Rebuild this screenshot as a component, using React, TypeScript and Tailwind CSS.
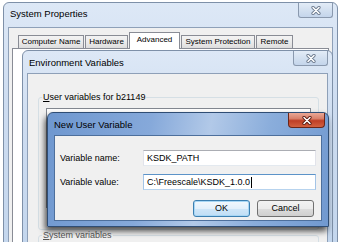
import React from 'react';

// caption close glyph (white X with dark outline)
const CloseGlyph = ({ dark }: { dark: string }) => (
  <svg width="10" height="9" viewBox="0 0 10 9">
    <path d="M2 1.5 L8 7.5 M8 1.5 L2 7.5" stroke={dark} strokeWidth="3.2" strokeLinecap="round" />
    <path d="M2 1.5 L8 7.5 M8 1.5 L2 7.5" stroke="#ffffff" strokeWidth="1.5" strokeLinecap="round" />
  </svg>
);

const InactiveClose = () => (
  <div className="flex h-[15px] w-[35px] shrink-0 items-center justify-center rounded-b-[3px] border border-t-0 border-[#8a99ae] bg-[linear-gradient(180deg,#e3ecf7_0%,#d3e0f0_50%,#c4d5eb_100%)]">
    <CloseGlyph dark="#6d7b8f" />
  </div>
);

const RedClose = () => (
  <div className="-mr-[3px] flex h-[15px] w-[37px] shrink-0 items-center justify-center rounded-b-[4px] border border-t-0 border-[#6a2518] bg-[linear-gradient(180deg,#eaa896_0%,#d8806b_40%,#bf3e25_55%,#d2603f_100%)]">
    <CloseGlyph dark="#5a1a10" />
  </div>
);

const Tab = ({ label, w, active }: { label: string; w: string; active?: boolean }) =>
  active ? (
    <div className={`relative z-10 -mb-[1px] flex h-[17px] items-start justify-center whitespace-nowrap border border-b-0 border-[#898c95] bg-white pt-[3px] text-[8px] ${w}`}>
      {label}
    </div>
  ) : (
    <div className={`flex h-[13px] items-center justify-center whitespace-nowrap border border-b-0 border-[#898c95] bg-[linear-gradient(180deg,#f3f3f3_0%,#ebebeb_50%,#dddddd_100%)] text-[8px] ${w}`}>
      {label}
    </div>
  );

export default function App() {
  return (
    <div className="relative h-[242px] w-[343px] overflow-hidden bg-white font-['Liberation_Sans',Arial,sans-serif] text-[9px] leading-none text-black">
      {/* System Properties */}
      <div className="absolute left-[3px] top-[2px] flex h-[260px] w-[335px] flex-col rounded-t-[6px] border border-[#7e90a8] bg-[linear-gradient(180deg,#dde8f6_0%,#cddcf0_40%,#c3d6ed_100%)] px-[4px]">
        <div className="flex h-[24px] shrink-0 items-start justify-between">
          <span className="pl-[2px] pt-[6px] text-[9.5px]">System Properties</span>
          <InactiveClose />
        </div>
        <div className="flex flex-1 flex-col border border-[#8ea0b8] bg-[#f0f0f0] px-[3px] pt-[4px]">
          <div className="flex h-[16px] items-end gap-[1px] pl-[6px]">
            <Tab label="Computer Name" w="w-[66px]" />
            <Tab label="Hardware" w="w-[43px]" />
            <Tab label="Advanced" w="w-[51px]" active />
            <Tab label="System Protection" w="w-[74px]" />
            <Tab label="Remote" w="w-[37px]" />
          </div>
          <div className="flex-1 border border-[#898c95] bg-white" />
        </div>
      </div>

      {/* Environment Variables */}
      <div className="absolute left-[22px] top-[50px] flex h-[200px] w-[311px] flex-col rounded-t-[6px] border border-[#7e90a8] bg-[linear-gradient(180deg,#dde8f6_0%,#cddcf0_40%,#c3d6ed_100%)] px-[4px]">
        <div className="flex h-[22px] shrink-0 items-start justify-between">
          <span className="pl-[2px] pt-[7px] text-[9.5px]">Environment Variables</span>
          <InactiveClose />
        </div>
        <div className="flex flex-1 flex-col border border-[#8ea0b8] bg-[#f0f0f0] pl-[10px] pr-[8px] pt-[23px]">
          <div className="relative h-[133px] shrink-0 rounded-[3px] border border-[#d5dfe5]">
            <span className="absolute -top-[5px] left-[3px] bg-[#f0f0f0] px-[1px]">
              <span className="underline">U</span>ser variables for b21149
            </span>
            <div className="mx-[7px] mt-[10px] h-[100px] border border-[#828790] bg-white" />
          </div>
          <div className="relative mt-[5px] h-[60px] rounded-[3px] border border-[#d5dfe5]">
            <span className="absolute -top-[5px] left-[3px] bg-[#f0f0f0] px-[1px] text-[#555]">
              <span className="underline">S</span>ystem variables
            </span>
          </div>
        </div>
      </div>

      {/* New User Variable */}
      <div className="absolute left-[47px] top-[112px] flex h-[115px] w-[282px] flex-col rounded-t-[6px] border border-[#2f4d74] bg-[linear-gradient(100deg,#6e97cf_0%,#86a9da_35%,#b2c9e8_55%,#8aaddb_75%,#7199d0_100%)] px-[6px] pb-[5px] shadow-[-2px_4px_6px_rgba(0,0,0,0.7)]">
        <div className="flex h-[22px] shrink-0 items-start justify-between">
          <span className="pt-[7px] text-[9.5px]">New User Variable</span>
          <RedClose />
        </div>
        <div className="flex flex-1 flex-col border border-[#4d6f9c] bg-[#f0f0f0] px-[5px] pt-[14px]">
          <div className="flex items-center">
            <span className="w-[83px]">Variable name:</span>
            <div className="flex h-[16px] w-[173px] items-center border border-[#abadb3] border-b-[#e3e9ef] border-x-[#e2e3ea] bg-white pl-[3px]">
              KSDK_PATH
            </div>
          </div>
          <div className="mt-[8px] flex items-center">
            <span className="w-[83px]">Variable value:</span>
            <div className="flex h-[16px] w-[173px] items-center border border-[#5c93c8] border-b-[#b7d3ee] border-x-[#a4c4e6] bg-white pl-[3px]">
              C:\Freescale\KSDK_1.0.0
              <span className="ml-[1px] h-[11px] w-[1px] bg-black" />
            </div>
          </div>
          <div className="mt-[10px] flex justify-end gap-[7px] pr-[2px]">
            <div className="flex h-[17px] w-[57px] items-center justify-center rounded-[3px] border border-[#3c7fb1] bg-[linear-gradient(180deg,#f2f8fd_0%,#e3f0fb_50%,#cfe6f8_51%,#c0def6_100%)] shadow-[inset_0_0_0_1px_#a8d7f5]">
              OK
            </div>
            <div className="flex h-[17px] w-[57px] items-center justify-center rounded-[3px] border border-[#707070] bg-[linear-gradient(180deg,#f2f2f2_0%,#ebebeb_50%,#dddddd_51%,#cfcfcf_100%)]">
              Cancel
            </div>
          </div>
        </div>
      </div>
    </div>
  );
}
